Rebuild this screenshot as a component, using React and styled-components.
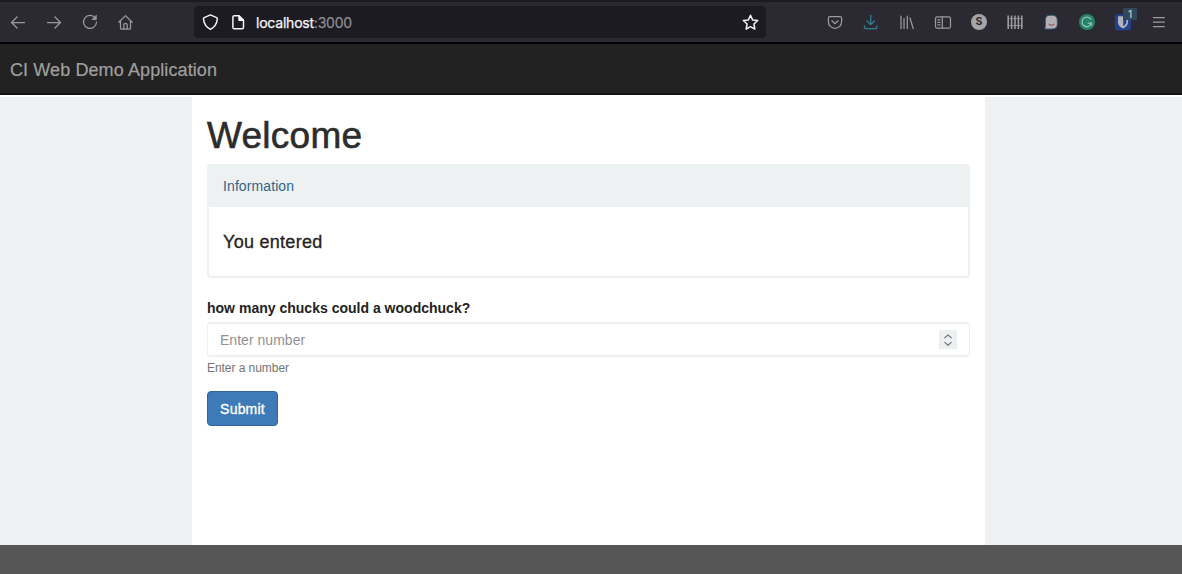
import React from "react";
import styled, { createGlobalStyle } from "styled-components";

const Global = createGlobalStyle`
  *, *::before, *::after { box-sizing: border-box; }
  html, body, #root { height: 100%; margin: 0; }
  body {
    overflow: hidden;
    background: #fff;
    font-family: "Liberation Sans", Arial, sans-serif;
    color: #222;
  }
`;

const Page = styled.div`
  height: 100%;
  display: flex;
  flex-direction: column;
`;

const Toolbar = styled.header`
  flex: none;
  height: 44px;
  display: flex;
  align-items: center;
  padding-right: 5px;
  background: #2b2a33;
  border-top: 2px solid #1c1b22;
  border-bottom: 2px solid #020203;
`;

const ToolGroup = styled.div`
  display: flex;
  margin-left: ${(p) => (p.$end ? "auto" : "0")};
`;

const ToolButton = styled.button`
  position: relative;
  display: flex;
  align-items: center;
  justify-content: center;
  width: 36px;
  height: 32px;
  padding: 0;
  border: 0;
  background: none;
  color: ${(p) => p.$color || "#9b9aa1"};
`;

const Glyph = styled.svg`
  display: block;
  flex: none;
  width: 18px;
  height: 18px;
  fill: none;
  stroke: currentColor;
  stroke-width: 1.25;
  stroke-linecap: round;
  stroke-linejoin: round;
`;

const AddressBar = styled.div`
  display: flex;
  align-items: center;
  width: 572px;
  height: 32px;
  margin-left: 50px;
  padding: 0 7px 0 7px;
  border-radius: 4px;
  background: #1c1b22;
  color: #f4f4f6;
  ${Glyph} { stroke-width: 1.5; }
`;

const PageGlyph = styled(Glyph)`
  margin-left: 10px;
`;

const Address = styled.span`
  flex: 1;
  margin-left: 9px;
  font-family: Inter, "Liberation Sans", sans-serif;
  font-size: 14px;
  letter-spacing: -0.22px;
  -webkit-text-stroke: 0.25px currentColor;
  color: #f7f7f8;
`;

const Port = styled.span`
  color: #8d8c92;
`;

const Counter = styled.span`
  position: absolute;
  left: 18px;
  top: 2px;
  width: 14px;
  height: 12px;
  border-radius: 1px;
  background: #30485a;
  color: #c6cbd0;
  font: 500 10px/12px Inter, sans-serif;
  text-align: center;
`;

const Disc = styled.span`
  width: 16px;
  height: 16px;
  border-radius: 50%;
  background: #a5a5a8;
  color: #29282f;
  font: bold 10.5px/16px Inter, sans-serif;
  text-align: center;
`;

const Navbar = styled.nav`
  flex: none;
  height: 51px;
  padding: 1px 10px 0;
  background: #222;
  border-bottom: 2px solid #121212;
  color: #a0a0a0;
  font-size: 18px;
  line-height: 50px;
  letter-spacing: 0.1px;
  -webkit-text-stroke: 0.2px currentColor;
`;

const Body = styled.main`
  flex: 1;
  display: flex;
  margin-top: 2px;
  padding-left: 192px;
  background: #edf1f2;
`;

const Content = styled.section`
  width: 793px;
  padding: 18px 15px 0;
  background: #fff;
`;

const Title = styled.h1`
  margin: 0;
  height: 49px;
  color: #2c2c2c;
  font-size: 37px;
  font-weight: 400;
  line-height: 42px;
  letter-spacing: 0.25px;
  -webkit-text-stroke: 0.6px currentColor;
`;

const Panel = styled.div`
  width: 763px;
  height: 114px;
  border: 2px solid #edf1f2;
  border-radius: 4px;
`;

const PanelHead = styled.div`
  height: 41px;
  padding-left: 14px;
  background: #edf1f2;
  color: #2f6587;
  font-size: 14px;
  line-height: 41px;
  letter-spacing: 0.1px;
`;

const PanelText = styled.p`
  margin: 0;
  padding: 25px 14px 0;
  color: #222;
  font-size: 18px;
  line-height: 20px;
  letter-spacing: 0.28px;
  -webkit-text-stroke: 0.3px currentColor;
`;

const Label = styled.label`
  display: block;
  margin-top: 20px;
  height: 24px;
  font-size: 14px;
  font-weight: 700;
  line-height: 20px;
  letter-spacing: 0.01px;
`;

const Field = styled.div`
  display: flex;
  align-items: center;
  width: 763px;
  height: 35px;
  padding: 0 12px;
  border: solid #edf1f2;
  border-width: 2px 1px;
  border-radius: 4px;
`;

const NumberInput = styled.input`
  flex: 1;
  padding: 0;
  border: 0;
  outline: 0;
  background: none;
  font: 14px/20px "Liberation Sans", Arial, sans-serif;
  letter-spacing: 0.03px;
  &::placeholder { color: #929292; opacity: 1; }
`;

const Spinner = styled.span`
  display: flex;
  align-items: center;
  justify-content: center;
  width: 18px;
  height: 19px;
  border-radius: 1px;
  background: #edf0f1;
  color: #77797b;
`;

const Hint = styled.small`
  display: block;
  margin-top: 3px;
  height: 31px;
  color: #737373;
  font-size: 12px;
  line-height: 17px;
  letter-spacing: -0.05px;
`;

const Submit = styled.button`
  display: block;
  width: 71px;
  height: 35px;
  padding: 0;
  border: 1px solid #2f659a;
  border-radius: 4px;
  background: #3e7ab8;
  color: #fff;
  font: 14px/20px "Liberation Sans", Arial, sans-serif;
  letter-spacing: 0.2px;
  -webkit-text-stroke: 0.35px currentColor;
`;

const Footer = styled.footer`
  flex: none;
  height: 29px;
  background: #565656;
`;

export default function App() {
  return (
    <Page>
      <Global />
      <Toolbar>
        <ToolGroup>
          <ToolButton aria-label="Back">
            <Glyph viewBox="0 0 18 18"><path d="M15.5 9.5H2.5M8 4L2.5 9.5L8 15" /></Glyph>
          </ToolButton>
          <ToolButton aria-label="Forward">
            <Glyph viewBox="0 0 18 18"><path d="M2.5 9.5H15.5M10 4L15.5 9.5L10 15" /></Glyph>
          </ToolButton>
          <ToolButton aria-label="Reload">
            <Glyph viewBox="0 0 18 18">
              <path d="M14.2 5A6.5 6.5 0 1 0 15.5 9.2" />
              <path d="M15.3 2.6V6.6H11.3Z" fill="currentColor" strokeWidth="0.8" />
            </Glyph>
          </ToolButton>
          <ToolButton aria-label="Home">
            <Glyph viewBox="0 0 18 18">
              <path d="M1.8 9.2L8.5 2.6L15.2 9.2M3.5 8V15.2Q3.5 16 4.3 16H12.7Q13.5 16 13.5 15.2V8M6.8 16V11.6Q6.8 10.5 7.8 10.5H9.2Q10.2 10.5 10.2 11.6V16" />
            </Glyph>
          </ToolButton>
        </ToolGroup>

        <AddressBar>
          <Glyph viewBox="0 0 18 18">
            <path d="M9.4 1.9L15.6 4.6Q16.4 5 16.3 6C15.9 10.3 13.6 14.2 9.4 16.4C5.2 14.2 2.9 10.3 2.5 6Q2.4 5 3.2 4.6Z" />
          </Glyph>
          <PageGlyph viewBox="0 0 18 18">
            <path d="M5.2 2.8H10L14.5 7.3V14.5Q14.5 15.8 13.2 15.8H5.2Q3.9 15.8 3.9 14.5V4.1Q3.9 2.8 5.2 2.8Z" />
            <path d="M10 3V7.3H14.3Z" fill="currentColor" />
          </PageGlyph>
          <Address>localhost<Port>:3000</Port></Address>
          <Glyph viewBox="0 0 18 18">
            <path d="M9.5 2.2L11.6 6.9L16.7 7.5L12.9 11L13.9 16.1L9.5 13.6L5.1 16.1L6.1 11L2.3 7.5L7.4 6.9Z" />
          </Glyph>
        </AddressBar>

        <ToolGroup $end>
          <ToolButton aria-label="Pocket">
            <Glyph viewBox="0 0 18 18">
              <path d="M3.8 3.5H14.2Q15.6 3.5 15.6 4.9V8.7A6.6 6.6 0 0 1 2.4 8.7V4.9Q2.4 3.5 3.8 3.5ZM5.9 7.8L9 10.7L12.1 7.8" />
            </Glyph>
          </ToolButton>
          <ToolButton aria-label="Downloads" $color="#348196">
            <Glyph viewBox="0 0 18 18">
              <path d="M8.7 2V11.6M5 8L8.7 11.6L12.4 8M2.4 12.8V14Q2.4 15.7 4.1 15.7H13.2Q14.9 15.7 14.9 14V12.8" />
            </Glyph>
          </ToolButton>
          <ToolButton aria-label="Library">
            <Glyph viewBox="0 0 18 18"><path d="M3 3V15.6M6 5.5V15.6M9.3 3V15.6M12 5L15.2 15.6" /></Glyph>
          </ToolButton>
          <ToolButton aria-label="Sidebars">
            <Glyph viewBox="0 0 18 18">
              <rect x="1.5" y="3.8" width="15" height="11.4" rx="1.8" />
              <path d="M8.3 4V15M3.8 6.8H6M3.8 9.3H6M3.8 11.8H6" />
            </Glyph>
          </ToolButton>
          <ToolButton aria-label="Session">
            <Disc>S</Disc>
          </ToolButton>
          <ToolButton aria-label="Containers">
            <Glyph viewBox="0 0 18 18">
              <path d="M2.2 2.5V16M5.6 2.5V16M9 2.5V16M12.4 2.5V16M15.8 2.5V16" strokeWidth="1.6" strokeLinecap="butt" />
              <path d="M1.6 5.6H16.4M1.6 12.5H16.4" strokeWidth="0.8" strokeLinecap="butt" />
            </Glyph>
          </ToolButton>
          <ToolButton aria-label="Assistant">
            <Glyph viewBox="0 0 18 18" stroke="none">
              <path d="M7.6 2.3H10.2Q15.3 2.3 15.3 7.6V11.3Q15.3 16 10 16H2.8L3.4 13V7.2Q3.4 2.3 7.6 2.3Z" fill="#b3afb5" stroke="#31576f" strokeWidth="0.9" />
              <path d="M7 11.2Q9.5 13.3 12 11.2" stroke="#8b4c51" strokeWidth="1.1" />
            </Glyph>
          </ToolButton>
          <ToolButton aria-label="Writing">
            <Glyph viewBox="0 0 18 18">
              <circle cx="9" cy="9" r="8" fill="#23836b" stroke="none" />
              <path d="M12.8 6.2A4.8 4.8 0 1 0 13.5 10H10.1M13.5 10V12.2" stroke="#a1c0b8" />
            </Glyph>
          </ToolButton>
          <ToolButton aria-label="Passwords">
            <Glyph viewBox="0 0 18 18">
              <rect x="1" y="1.2" width="16" height="16" rx="2.5" fill="#24418b" stroke="none" />
              <path d="M4 3.2H14V9.2Q14 13 9 15.4Q4 13 4 9.2Z" fill="#b1b4be" stroke="none" />
              <path d="M9.2 4.6H12.4V9.2Q12.4 11.6 9.2 13.4Z" fill="#24418b" stroke="none" />
            </Glyph>
            <Counter>1</Counter>
          </ToolButton>
          <ToolButton aria-label="Menu">
            <Glyph viewBox="0 0 18 18"><path d="M3.4 4.5H14.4M3.4 9H14.4M3.4 13.5H14.4" /></Glyph>
          </ToolButton>
        </ToolGroup>
      </Toolbar>

      <Navbar>CI Web Demo Application</Navbar>

      <Body>
        <Content>
          <Title>Welcome</Title>
          <Panel>
            <PanelHead>Information</PanelHead>
            <PanelText>You entered</PanelText>
          </Panel>
          <Label htmlFor="chucks">how many chucks could a woodchuck?</Label>
          <Field>
            <NumberInput id="chucks" placeholder="Enter number" />
            <Spinner>
              <Glyph viewBox="0 0 18 18"><path d="M5.8 6.8L9 3.9L12.2 6.8M5.8 11.4L9 14.3L12.2 11.4" /></Glyph>
            </Spinner>
          </Field>
          <Hint>Enter a number</Hint>
          <Submit>Submit</Submit>
        </Content>
      </Body>
      <Footer />
    </Page>
  );
}
